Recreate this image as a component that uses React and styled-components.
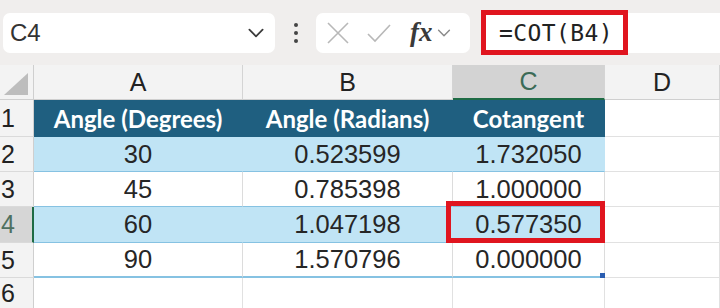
import React from 'react'
import styled, { createGlobalStyle, css } from 'styled-components'

const GlobalStyle = createGlobalStyle`
	html, body {
		margin: 0;
		padding: 0;
		background: #ffffff;
		overflow: hidden;
	}
	body {
		font-family: "Liberation Sans", Arial, sans-serif;
		color: #222;
	}
`

const columns = ['A', 'B', 'C', 'D']

const rows = [
	{ num: 1, kind: 'head', cells: ['Angle (Degrees)', 'Angle (Radians)', 'Cotangent'] },
	{ num: 2, kind: 'band', cells: ['30', '0.523599', '1.732050'] },
	{ num: 3, kind: 'plain', cells: ['45', '0.785398', '1.000000'] },
	{ num: 4, kind: 'band', cells: ['60', '1.047198', '0.577350'], selected: true },
	{ num: 5, kind: 'plain', cells: ['90', '1.570796', '0.000000'], last: true },
	{ num: 6, kind: 'empty', cells: ['', '', ''] },
]

const rowHeights = [37, 35, 35, 36, 35, 32]

function Chevron({ size = 18, color = '#333' }) {
	return (
		<svg width={size} height={size} viewBox="0 0 20 20" fill="none">
			<path d="M4 7 L10 13 L16 7" stroke={color} strokeWidth="1.6" strokeLinecap="round" strokeLinejoin="round" />
		</svg>
	)
}

export default function App() {
	return (
		<Page>
			<GlobalStyle />
			<Toolbar>
				<NameBox>
					<span>C4</span>
					<Chevron size={22} color="#3a3a3a" />
				</NameBox>
				<Dots>
					<i />
					<i />
					<i />
				</Dots>
				<FormulaButtons>
					<svg width="26" height="26" viewBox="0 0 26 26">
						<path d="M3 3 L23 23 M23 3 L3 23" stroke="#b8b8b8" strokeWidth="1.6" />
					</svg>
					<svg width="26" height="26" viewBox="0 0 26 26">
						<path d="M2 14 L9 21 L24 5" stroke="#b8b8b8" strokeWidth="1.6" fill="none" />
					</svg>
					<Fx>fx</Fx>
					<Chevron size={18} color="#8a8a8a" />
				</FormulaButtons>
				<FormulaInput>
					<FormulaText>=COT(B4)</FormulaText>
				</FormulaInput>
			</Toolbar>

			<Sheet>
				<Corner>
					<svg width="24" height="22" viewBox="0 0 24 22">
						<polygon points="24,0 24,22 0,22" fill="#bdbdbd" />
					</svg>
				</Corner>
				{columns.map(c => (
					<ColHead key={c} $active={c === 'C'}>{c}</ColHead>
				))}

				{rows.map((r, i) => (
					<React.Fragment key={r.num}>
						<RowHead $h={rowHeights[i]} $active={r.selected}>{r.num}</RowHead>
						{r.cells.map((v, j) => (
							<Cell key={j} $kind={r.kind} $last={r.last}>
								{v}
								{r.selected && j === 2 && <Callout />}
								{r.last && j === 2 && <Handle />}
							</Cell>
						))}
						<Cell $kind="empty" />
					</React.Fragment>
				))}
			</Sheet>
		</Page>
	)
}

const Page = styled.div`
	width: 720px;
	height: 308px;
	overflow: hidden;
	background: #fff;
`

const Toolbar = styled.div`
	display: flex;
	align-items: center;
	height: 65px;
	padding: 0 0 0 3px;
	box-sizing: border-box;
	background: #f0eeed;
`

const NameBox = styled.div`
	width: 272px;
	height: 40px;
	box-sizing: border-box;
	background: #fff;
	border-radius: 7px;
	display: flex;
	align-items: center;
	justify-content: space-between;
	padding: 0 8px 0 7px;
	font-size: 24px;
	color: #333;
`

const Dots = styled.div`
	width: 41px;
	display: flex;
	flex-direction: column;
	align-items: center;
	gap: 4px;

	i {
		width: 4px;
		height: 4px;
		border-radius: 50%;
		background: #444;
	}
`

const FormulaButtons = styled.div`
	width: 154px;
	height: 40px;
	box-sizing: border-box;
	background: #fff;
	border-radius: 7px;
	display: flex;
	align-items: center;
	padding: 0 4px 0 9px;
	gap: 15px;

	svg:last-child {
		margin-left: -13px;
	}
`

const Fx = styled.span`
	font-family: "Liberation Serif", "Times New Roman", serif;
	font-style: italic;
	font-weight: 700;
	font-size: 27px;
	color: #3a3a3a;
	margin-left: 3px;
`

const FormulaInput = styled.div`
	flex: 1;
	height: 40px;
	margin-left: 11px;
	background: #fff;
	display: flex;
	align-items: center;
`

const FormulaText = styled.span`
	display: inline-flex;
	align-items: center;
	height: 45px;
	box-sizing: border-box;
	padding: 0 10px 0 13px;
	border: 5px solid #e0151f;
	font-family: "DejaVu Sans Mono", "Liberation Mono", monospace;
	font-size: 23px;
	letter-spacing: 0.4px;
	color: #222;
`

const Sheet = styled.div`
	display: grid;
	grid-template-columns: 34px 209px 210px 152px 1fr;
	grid-template-rows: 35px;
	grid-auto-rows: auto;
`

const Corner = styled.div`
	background: #f3f3f3;
	border-right: 1px solid #cfcfcf;
	border-bottom: 1px solid #cfcfcf;
	display: flex;
	align-items: flex-end;
	justify-content: flex-end;
	padding: 0 5px 4px 0;
`

const ColHead = styled.div`
	background: ${p => (p.$active ? '#d3d3d3' : '#f3f3f3')};
	color: ${p => (p.$active ? '#3b6b57' : '#222')};
	border-right: 1px solid #d4d4d4;
	border-bottom: ${p => (p.$active ? '2px solid #1e6b45' : '1px solid #cfcfcf')};
	display: flex;
	align-items: center;
	justify-content: center;
	font-size: 25px;
`

const RowHead = styled.div`
	height: ${p => p.$h}px;
	box-sizing: border-box;
	background: ${p => (p.$active ? '#d6d6d6' : '#f3f3f3')};
	color: ${p => (p.$active ? '#4f7060' : '#222')};
	border-right: ${p => (p.$active ? '2px solid #1e6b45' : '1px solid #cfcfcf')};
	border-bottom: 1px solid #dadada;
	display: flex;
	align-items: center;
	padding-left: 1px;
	font-size: 25px;
`

const kindStyles = {
	head: css`
		background: #1f5f80;
		color: #fff;
		font-family: Lato, "Noto Sans", sans-serif;
		font-weight: 700;
		font-size: 24px;
		border-bottom: 1px solid #1f5f80;
		border-right: 1px solid #1f5f80;
	`,
	band: css`
		background: #c0e4f5;
		border-bottom: 1px solid #86c2e2;
		border-right: 1px solid #c0e4f5;
	`,
	plain: css`
		background: #fff;
		border-bottom: 1px solid #86c2e2;
		border-right: 1px solid #dcdcdc;
	`,
	empty: css`
		background: #fff;
		border-bottom: 1px solid #e1e1e1;
		border-right: 1px solid #e1e1e1;
	`,
}

const Cell = styled.div`
	position: relative;
	display: flex;
	align-items: center;
	justify-content: center;
	box-sizing: border-box;
	font-size: 25.5px;
	color: #262626;
	${p => kindStyles[p.$kind]}
	${p => p.$last && css`border-bottom: 2px solid #86c2e2;`}
`

const Callout = styled.div`
	position: absolute;
	left: -7px;
	top: -6px;
	right: -1px;
	bottom: -1px;
	border: 5px solid #e0151f;
	pointer-events: none;
`

const Handle = styled.div`
	position: absolute;
	right: -2px;
	bottom: -3px;
	width: 6px;
	height: 6px;
	background: #2a5db0;
`
